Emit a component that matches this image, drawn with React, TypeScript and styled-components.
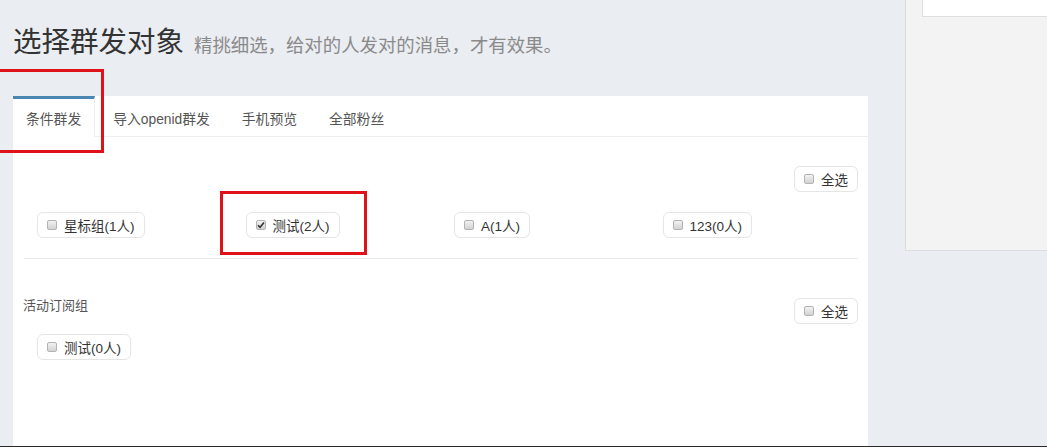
import React from "react";
import styled, { createGlobalStyle } from "styled-components";

const GlobalStyle = createGlobalStyle`
  html, body {
    margin: 0;
    padding: 0;
    height: 447px;
    overflow: hidden;
    background: #eaedf2;
  }
  body {
    font-family: "Liberation Sans", "Noto Sans CJK SC", sans-serif;
  }
  * { box-sizing: border-box; }
`;

const Page = styled.div`
  position: relative;
  height: 447px;
  display: flex;
  flex-direction: column;
`;

const Body = styled.div`
  flex: 1;
  min-height: 0;
  display: flex;
  gap: 37px;
  padding-left: 13px;
`;

const Main = styled.main`
  width: 855px;
  display: flex;
  flex-direction: column;
`;

const Header = styled.header`
  height: 96px;
  flex-shrink: 0;
  padding-top: 22px;
  display: flex;
  align-items: baseline;
  gap: 10px;
`;

const Title = styled.h1`
  margin: 0;
  font-size: 28.5px;
  line-height: 40px;
  font-weight: normal;
  color: #333;
`;

const Subtitle = styled.span`
  font-size: 18.4px;
  color: #8a8a8a;
`;

const Card = styled.section`
  flex: 1;
  background: #fff;
  display: flex;
  flex-direction: column;
`;

const Tabs = styled.nav`
  display: flex;
  height: 41px;
  border-bottom: 1px solid #eceef0;
`;

const Tab = styled.div<{ $active?: boolean }>`
  height: 41px;
  margin-bottom: -1px;
  margin-right: 5px;
  padding: 0 13px;
  display: flex;
  align-items: center;
  font-size: 13.8px;
  color: #555;
  background: ${(p) => (p.$active ? "#fff" : "transparent")};
  border-top: 3px solid ${(p) => (p.$active ? "#4a86b2" : "transparent")};
  border-right: 1px solid ${(p) => (p.$active ? "#eceef0" : "transparent")};
`;

const Content = styled.div`
  padding: 0 10px 0 11px;
`;

const SectionHead = styled.div<{ $top: number }>`
  margin-top: ${(p) => p.$top}px;
  display: flex;
  justify-content: space-between;
  align-items: flex-start;
`;

const GroupLabel = styled.span`
  font-size: 13px;
  line-height: 16px;
  color: #555;
  margin-left: -1px;
`;

const Items = styled.div<{ $top: number }>`
  margin-top: ${(p) => p.$top}px;
  display: grid;
  grid-template-columns: repeat(4, 1fr);
`;

const Cell = styled.div`
  padding-left: 13px;
`;

const Divider = styled.hr`
  margin: 20px 0 0;
  border: none;
  border-top: 1px solid #ebebeb;
  height: 0;
`;

const Chip = styled.label`
  display: inline-flex;
  align-items: center;
  gap: 7px;
  height: 26px;
  padding: 0 9px 0 9px;
  border: 1px solid #e5e5e5;
  border-radius: 6px;
  background: #fff;
  font-size: 13.5px;
  color: #333;
  white-space: nowrap;
`;

const Box = styled.span`
  width: 10px;
  height: 10px;
  border: 1px solid #b3b3b3;
  border-radius: 2px;
  background: linear-gradient(#f2f2f2, #d2d2d2);
  display: flex;
  align-items: center;
  justify-content: center;
`;

const Side = styled.aside`
  flex: 1;
  align-self: flex-start;
  height: 251px;
  padding-left: 16px;
  background: #f3f3f4;
  border-left: 1px solid #dcdde0;
  border-bottom: 1px solid #dcdde0;
`;

const SideBox = styled.div`
  height: 17px;
  background: #fff;
  border-left: 1px solid #dedede;
  border-bottom: 1px solid #dedede;
`;

const Footer = styled.footer`
  height: 1px;
  flex-shrink: 0;
  background: #2a2a2a;
`;

const Mark = styled.div<{ $l: number; $t: number; $w: number; $h: number }>`
  position: absolute;
  left: ${(p) => p.$l}px;
  top: ${(p) => p.$t}px;
  width: ${(p) => p.$w}px;
  height: ${(p) => p.$h}px;
  border: 3px solid #e01219;
  pointer-events: none;
`;

function Check({ label, checked }: { label: string; checked?: boolean }) {
  return (
    <Chip>
      <Box>
        {checked && (
          <svg width="8" height="8" viewBox="0 0 8 8">
            <path d="M1 4.2 L3.1 6.3 L7 1.6" fill="none" stroke="#333" strokeWidth="1.6" />
          </svg>
        )}
      </Box>
      {label}
    </Chip>
  );
}

export default function App() {
  return (
    <>
      <GlobalStyle />
      <Page>
        <Body>
          <Main>
            <Header>
              <Title>选择群发对象</Title>
              <Subtitle>精挑细选，给对的人发对的消息，才有效果。</Subtitle>
            </Header>
            <Card>
              <Tabs>
                <Tab $active>条件群发</Tab>
                <Tab>导入openid群发</Tab>
                <Tab>手机预览</Tab>
                <Tab>全部粉丝</Tab>
              </Tabs>
              <Content>
                <SectionHead $top={29}>
                  <GroupLabel />
                  <Check label="全选" />
                </SectionHead>
                <Items $top={20}>
                  <Cell><Check label="星标组(1人)" /></Cell>
                  <Cell><Check label="测试(2人)" checked /></Cell>
                  <Cell><Check label="A(1人)" /></Cell>
                  <Cell><Check label="123(0人)" /></Cell>
                </Items>
                <Divider />
                <SectionHead $top={39}>
                  <GroupLabel>活动订阅组</GroupLabel>
                  <Check label="全选" />
                </SectionHead>
                <Items $top={10}>
                  <Cell><Check label="测试(0人)" /></Cell>
                </Items>
              </Content>
            </Card>
          </Main>
          <Side>
            <SideBox />
          </Side>
        </Body>
        <Footer />
        <Mark $l={-3} $t={69} $w={107} $h={84} />
        <Mark $l={220} $t={191} $w={147} $h={64} />
      </Page>
    </>
  );
}
